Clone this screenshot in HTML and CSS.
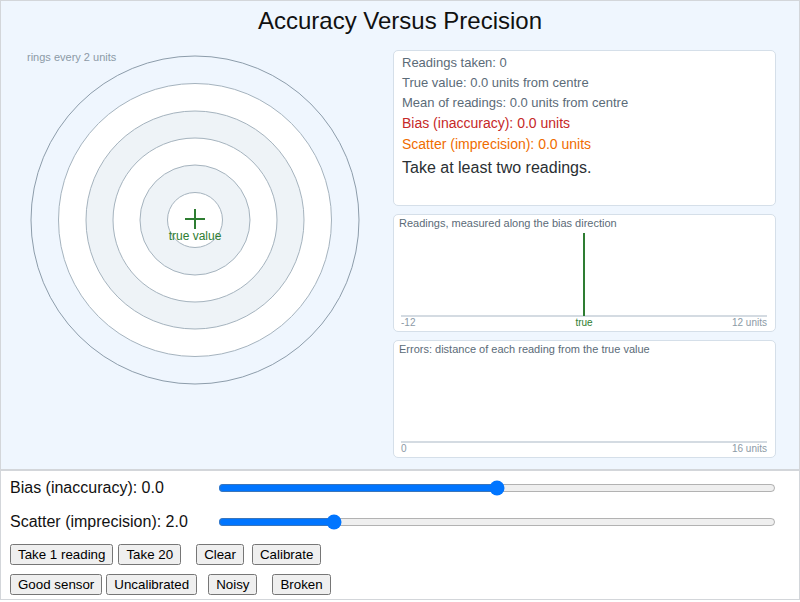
FILE: index.html
```html
<!DOCTYPE html>
<html>
<head>
<meta charset="utf-8">
<title>Accuracy Versus Precision</title>
<link rel="stylesheet" href="styles.css">
</head>
<body>
<div class="app">
  <div class="top">
    <h1 class="title">Accuracy Versus Precision</h1>
    <div class="main">
      <svg class="target" width="384" height="408" viewBox="0 0 384 408">
        <text class="rings-label" x="26" y="11">rings every 2 units</text>
        <circle cx="194" cy="170" r="164" class="ring-outer"/>
        <circle cx="194" cy="170" r="136.5" class="ring-white"/>
        <circle cx="194" cy="170" r="109" class="ring-grey"/>
        <circle cx="194" cy="170" r="82" class="ring-white"/>
        <circle cx="194" cy="170" r="55" class="ring-grey"/>
        <circle cx="194" cy="170" r="27.5" class="ring-white"/>
        <line x1="184" y1="169" x2="204" y2="169" class="cross"/>
        <line x1="194" y1="159" x2="194" y2="179" class="cross"/>
        <text class="true-label" x="194" y="190" text-anchor="middle">true value</text>
      </svg>
      <div class="side">
        <div class="box stats">
          <div class="stat">Readings taken: 0</div>
          <div class="stat">True value: 0.0 units from centre</div>
          <div class="stat">Mean of readings: 0.0 units from centre</div>
          <div class="stat big bias">Bias (inaccuracy): 0.0 units</div>
          <div class="stat big scatter">Scatter (imprecision): 0.0 units</div>
          <div class="message">Take at least two readings.</div>
        </div>
        <div class="box chart">
          <div class="chart-title">Readings, measured along the bias direction</div>
          <svg class="chart-svg" width="371" height="101" viewBox="0 0 371 101">
            <line x1="2" y1="86" x2="368" y2="86" class="axis"/>
            <line x1="185" y1="3" x2="185" y2="86" class="true-line"/>
            <text x="2" y="96" class="axis-label">-12</text>
            <text x="185" y="96" class="axis-label true-text" text-anchor="middle">true</text>
            <text x="368" y="96" class="axis-label" text-anchor="end">12 units</text>
          </svg>
        </div>
        <div class="box chart">
          <div class="chart-title">Errors: distance of each reading from the true value</div>
          <svg class="chart-svg" width="371" height="101" viewBox="0 0 371 101">
            <line x1="2" y1="86" x2="368" y2="86" class="axis"/>
            <text x="2" y="96" class="axis-label">0</text>
            <text x="368" y="96" class="axis-label" text-anchor="end">16 units</text>
          </svg>
        </div>
      </div>
    </div>
  </div>
  <div class="controls">
    <div class="sliders">
      <label class="slider-label" for="bias">Bias (inaccuracy): 0.0</label>
      <input class="slider" id="bias" type="range" min="-10" max="10" step="0.1" value="0">
      <label class="slider-label" for="scatter">Scatter (imprecision): 2.0</label>
      <input class="slider" id="scatter" type="range" min="0" max="10" step="0.1" value="2">
    </div>
    <div class="btn-row">
      <button class="btn">Take 1 reading</button>
      <button class="btn gap5">Take 20</button>
      <button class="btn gap15">Clear</button>
      <button class="btn gap8">Calibrate</button>
    </div>
    <div class="btn-row second">
      <button class="btn">Good sensor</button>
      <button class="btn gap4">Uncalibrated</button>
      <button class="btn gap11">Noisy</button>
      <button class="btn gap15">Broken</button>
    </div>
  </div>
</div>
</body>
</html>
```
FILE: styles.css
```css
html, body {
  margin: 0;
  padding: 0;
  background: #ffffff;
  font-family: "Liberation Sans", Arial, sans-serif;
}
.app {
  width: 800px;
  height: 600px;
  box-sizing: border-box;
  border: 1px solid #d3d6da;
  display: flex;
  flex-direction: column;
}
.top {
  height: 470px;
  box-sizing: border-box;
  background: #eff6fe;
  border-bottom: 2px solid #d3d6da;
}
.title {
  margin: 0;
  font-size: 24px;
  font-weight: normal;
  line-height: 40px;
  text-align: center;
  color: #111111;
}
.main {
  display: flex;
  gap: 8px;
  padding-top: 9px;
}
.target {
  display: block;
  flex: 0 0 auto;
}
.rings-label {
  font-size: 11px;
  fill: #8c9aa6;
}
.ring-outer {
  fill: #eff6fe;
  stroke: #8d9dab;
  stroke-width: 1;
}
.ring-white {
  fill: #ffffff;
  stroke: #a5b3be;
  stroke-width: 1;
}
.ring-grey {
  fill: #eef3f7;
  stroke: #a5b3be;
  stroke-width: 1;
}
.cross {
  stroke: #2e7d32;
  stroke-width: 2;
}
.true-label {
  font-size: 12px;
  fill: #2e7d32;
}
.side {
  width: 383px;
  display: flex;
  flex-direction: column;
  gap: 8px;
}
.box {
  background: #ffffff;
  border: 1px solid #d5dfe9;
  border-radius: 5px;
  box-sizing: border-box;
}
.stats {
  height: 156px;
  padding: 2px 8px;
}
.stat {
  font-size: 13px;
  line-height: 20px;
  color: #5b6b78;
}
.stat.big {
  font-size: 14px;
  line-height: 21px;
}
.bias {
  color: #c62828;
}
.scatter {
  color: #ef6c00;
}
.message {
  margin-top: 1px;
  font-size: 16px;
  line-height: 24px;
  color: #2a2f33;
}
.chart {
  height: 118px;
  padding: 1px 5px 0;
}
.chart-title {
  font-size: 11px;
  line-height: 14px;
  color: #5b6b78;
}
.chart-svg {
  display: block;
}
.axis {
  stroke: #d4dbe2;
  stroke-width: 2;
}
.true-line {
  stroke: #2e7d32;
  stroke-width: 2;
}
.axis-label {
  font-size: 10px;
  fill: #8c9aa6;
}
.true-text {
  fill: #2e7d32;
}
.controls {
  padding: 0 9px;
  flex: 1 1 auto;
}
.sliders {
  display: grid;
  grid-template-columns: 208px 558px;
  grid-auto-rows: 33px;
  row-gap: 1px;
  align-items: center;
}
.slider-label {
  font-size: 16px;
  color: #111111;
}
.slider {
  width: 558px;
  margin: 0;
}
.btn-row {
  display: flex;
  margin-top: 6px;
}
.btn-row.second {
  margin-top: 9px;
}
.btn {
  font-family: "Liberation Sans", Arial, sans-serif;
  font-size: 13.333px;
  height: 21px;
  padding: 1px 6px;
  margin: 0;
}
.gap4 { margin-left: 4px; }
.gap5 { margin-left: 5px; }
.gap8 { margin-left: 8px; }
.gap11 { margin-left: 11px; }
.gap15 { margin-left: 15px; }
```
